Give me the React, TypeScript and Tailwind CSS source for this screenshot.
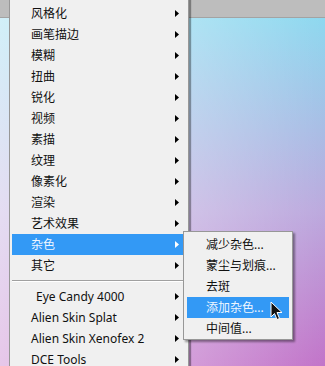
import React, { JSX } from 'react';

const mainItems: { label: string; indent?: boolean; sep?: boolean; active?: boolean }[] = [
  { label: '风格化' },
  { label: '画笔描边' },
  { label: '模糊' },
  { label: '扭曲' },
  { label: '锐化' },
  { label: '视频' },
  { label: '素描' },
  { label: '纹理' },
  { label: '像素化' },
  { label: '渲染' },
  { label: '艺术效果' },
  { label: '杂色', active: true },
  { label: '其它' },
  { label: '', sep: true },
  { label: 'Eye Candy 4000', indent: true },
  { label: 'Alien Skin Splat' },
  { label: 'Alien Skin Xenofex 2' },
  { label: 'DCE Tools' },
];

const subItems = [
  { label: '减少杂色...' },
  { label: '蒙尘与划痕...' },
  { label: '去斑' },
  { label: '添加杂色...', active: true },
  { label: '中间值...' },
];

const Arrow = ({ white }: { white?: boolean }): JSX.Element => (
  <svg width="4" height="7" viewBox="0 0 4 7" className="shrink-0">
    <path d="M0 0 L4 3.5 L0 7 Z" fill={white ? '#ffffff' : '#000000'} />
  </svg>
);

const Cursor = (): JSX.Element => (
  <svg width="13" height="20" viewBox="0 0 13 20" className="absolute left-[270px] top-[301px]">
    <path
      d="M1 1 L1 16 L4.5 12.5 L7 18.5 L9.5 17.5 L7 11.5 L12 11.5 Z"
      fill="#111111"
      stroke="#ffffff"
      strokeWidth="1"
      strokeLinejoin="round"
    />
  </svg>
);

const App = (): JSX.Element => {
  return (
    <div
      className="relative w-[325px] h-[366px] overflow-hidden flex flex-col text-[12px] text-[#111]"
      style={{ fontFamily: '"Noto Sans", "Noto Sans CJK SC", sans-serif' }}
    >
      {/* top bar */}
      <div className="h-[18px] shrink-0 bg-[#bdbdbd] border-b border-[#a3a3a3]" />
      {/* canvas */}
      <div className="flex-1 bg-[linear-gradient(to_right,rgba(255,255,255,0.6),rgba(255,255,255,0.28)_60%,rgba(255,255,255,0)),linear-gradient(to_bottom,#8ed8ef,#bcaade_55%,#c274c9)]" />

      {/* main menu */}
      <div className="absolute left-[9px] top-[-10px] w-[180px] h-[400px] bg-[#f0f0f0] border-l border-r border-[#979797] shadow-[2px_0_1px_rgba(0,0,0,0.35)] pt-[13px]">
        {mainItems.map((item, i) =>
          item.sep ? (
            <div key={i} className="h-[10px] flex flex-col justify-center ml-[2px] mr-[4px]">
              <div className="h-px bg-[#a0a0a0]" />
              <div className="h-px bg-white" />
            </div>
          ) : (
            <div
              key={i}
              className={
                'h-[21px] ml-[2px] mr-[4px] flex items-center justify-between pr-[5px] ' +
                (item.active ? 'bg-[#3399f5] text-[#eef6ff]' : '')
              }
            >
              <span className={item.indent ? 'pl-[24px] leading-none' : 'pl-[19px] leading-none'}>{item.label}</span>
              <Arrow white={item.active} />
            </div>
          )
        )}
      </div>

      {/* sub menu */}
      <div className="absolute left-[183px] top-[231px] w-[110px] bg-[#f0f0f0] border border-[#979797] shadow-[2px_2px_2px_rgba(0,0,0,0.4)] pt-[2px]">
        {subItems.map((item, i) => (
          <div
            key={i}
            className={
              'h-[21px] mx-[3px] flex items-center pl-[19px] ' +
              (item.active ? 'bg-[#3399f5] text-[#eef6ff]' : '')
            }
          >
            <span className="leading-none">{item.label}</span>
          </div>
        ))}
      </div>

      <Cursor />
    </div>
  );
};

export default App;
